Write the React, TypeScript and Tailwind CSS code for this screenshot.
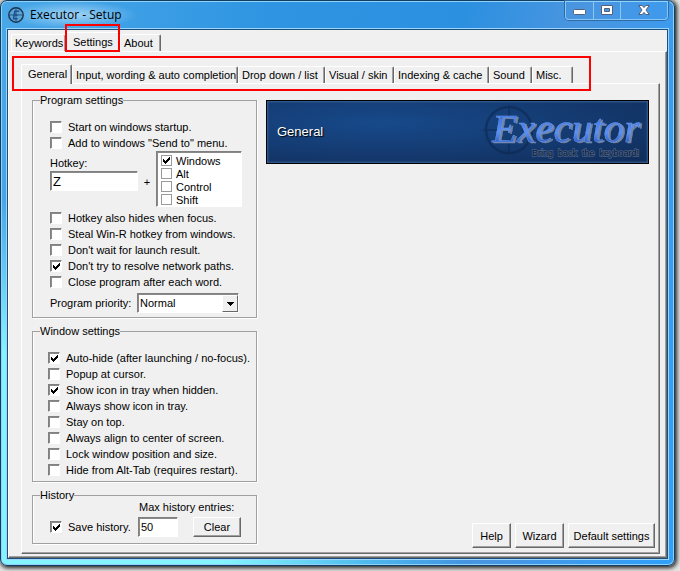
import type { ReactNode } from "react";
import clsx from "clsx";

const mainTabs = [
  { label: "Keywords", width: "w-[55px]" },
  { label: "Settings", width: "w-[54px]" },
  { label: "About", width: "w-[41px]" },
];

const pageTabs = [
  { label: "General", width: "w-[51px]" },
  { label: "Input, wording & auto completion", width: "w-[166px]" },
  { label: "Drop down / list", width: "w-[87px]" },
  { label: "Visual / skin", width: "w-[69px]" },
  { label: "Indexing & cache", width: "w-[95px]" },
  { label: "Sound", width: "w-[43px]" },
  { label: "Misc.", width: "w-[41px]" },
];

const modifiers = [
  { label: "Windows", checked: true },
  { label: "Alt", checked: false },
  { label: "Control", checked: false },
  { label: "Shift", checked: false },
];

const startupOptions = [
  { label: "Start on windows startup.", checked: false },
  { label: 'Add to windows "Send to" menu.', checked: false },
];

const launchOptions = [
  { label: "Hotkey also hides when focus.", checked: false },
  { label: "Steal Win-R hotkey from windows.", checked: false },
  { label: "Don't wait for launch result.", checked: false },
  { label: "Don't try to resolve network paths.", checked: true },
  { label: "Close program after each word.", checked: false },
];

const windowOptions = [
  { label: "Auto-hide (after launching / no-focus).", checked: true },
  { label: "Popup at cursor.", checked: false },
  { label: "Show icon in tray when hidden.", checked: true },
  { label: "Always show icon in tray.", checked: false },
  { label: "Stay on top.", checked: false },
  { label: "Always align to center of screen.", checked: false },
  { label: "Lock window position and size.", checked: false },
  { label: "Hide from Alt-Tab (requires restart).", checked: false },
];

const sunken =
  "border border-t-[#808080] border-l-[#808080] border-r-white border-b-white bg-white shadow-[inset_1px_1px_0_#8a8a8a]";

function Check({ label, checked, flat }: { label: string; checked: boolean; flat?: boolean }) {
  return (
    <label className={clsx("flex items-center", flat ? "h-[13px] gap-1" : "h-4 gap-1.5")}>
      <span className="grid shrink-0">
        <input
          type="checkbox"
          defaultChecked={checked}
          className={clsx(
            "peer col-start-1 row-start-1 m-0 appearance-none",
            flat ? "size-[11px] border border-[#9a9a9a] bg-white" : clsx("size-3", sunken)
          )}
        />
        <svg
          viewBox="0 0 7 7"
          className="pointer-events-none invisible col-start-1 row-start-1 size-[7px] place-self-center peer-checked:visible"
          shapeRendering="crispEdges"
        >
          <path d="M0 2h1v1h1v1h1v-1h1v-1h1v-1h1v-1h1v3h-1v1h-1v1h-1v1h-1v1h-1v-1h-1v-1h-1z" />
        </svg>
      </span>
      <span className="whitespace-nowrap">{label}</span>
    </label>
  );
}

function Group({ title, className, children }: { title: string; className: string; children: ReactNode }) {
  return (
    <fieldset className="min-w-0 border border-[#a0a0a0] shadow-[1px_1px_0_#fff,inset_1px_0_0_#fff]">
      <legend className="ml-[7px] bg-[#f0f0f0] leading-3">{title}</legend>
      <div className={className}>{children}</div>
    </fieldset>
  );
}

function Button({ children, className }: { children: ReactNode; className?: string }) {
  return (
    <button
      type="button"
      className={clsx(
        "border border-t-white border-l-white border-r-[#696969] border-b-[#696969] bg-[#f0f0f0] text-center whitespace-nowrap shadow-[inset_-1px_-1px_0_#a0a0a0]",
        className
      )}
    >
      {children}
    </button>
  );
}

function Tab({ label, width, selected }: { label: string; width: string; selected?: boolean }) {
  return (
    <button
      type="button"
      role="tab"
      aria-selected={!!selected}
      className={clsx(
        "rounded-t-xs border-t border-r border-l border-t-white border-r-[#696969] border-l-white bg-[#f0f0f0] text-left whitespace-nowrap shadow-[inset_-1px_0_0_#a0a0a0]",
        selected ? "z-10 -mb-px h-5 pb-0.5 pl-1.5" : "h-[17px] pl-[3px]",
        width
      )}
    >
      {label}
    </button>
  );
}

function AppIcon() {
  return (
    <svg viewBox="0 0 16 16" className="size-4" fill="none">
      <circle cx="8" cy="8" r="7.2" fill="#5aa3d3" stroke="#1b3550" strokeWidth="1.4" />
      <path d="M0.5 8h15M8 0.5v15" stroke="#1d486f" strokeWidth="0.8" />
      <path d="M6.2 4.2h5M5.4 8h4.2M4.8 11.8h4.8M6.9 4.2L5.5 11.8" stroke="#1c4f96" strokeWidth="1.5" />
    </svg>
  );
}

function TitleBar() {
  return (
    <header className="flex h-7 shrink-0 items-start justify-between pl-px">
      <div className="flex h-7 items-center gap-1.5 bg-[radial-gradient(ellipse_at_center,rgba(190,228,250,0.75),transparent_70%)] pr-4">
        <AppIcon />
        <h1 className="font-['Open_Sans',sans-serif] text-[12px] leading-4 text-black">Executor - Setup</h1>
      </div>
      <div className="flex h-[19px] rounded-b-[4px] border border-t-0 border-[#8cc6f2] text-white shadow-[0_0_0_1px_#2b6ca8]">
        <button type="button" aria-label="Minimize" className="grid w-7 place-items-center border-r border-[#8cc6f2]">
          <svg viewBox="0 0 13 6" className="mt-1 h-1.5 w-[13px]">
            <rect x="0.5" y="0.5" width="12" height="5" rx="1" fill="#fff" stroke="#566079" />
          </svg>
        </button>
        <button type="button" aria-label="Maximize" className="grid w-[27px] place-items-center border-r border-[#8cc6f2]">
          <svg viewBox="0 0 12 10" className="h-2.5 w-3">
            <path
              d="M0.5 0.5h11v9h-11zM3.5 3.5v3h5v-3z"
              fill="#fff"
              fillRule="evenodd"
              stroke="#566079"
            />
          </svg>
        </button>
        <button type="button" aria-label="Close" className="grid w-[46px] place-items-center">
          <svg viewBox="0 0 12 10" className="h-2.5 w-3">
            <path
              d="M0.8 0.5h3.4L6 2.6 7.8 0.5h3.4L8 5l3.2 4.5H7.8L6 7.4 4.2 9.5H0.8L4 5z"
              fill="#fff"
              stroke="#566079"
            />
          </svg>
        </button>
      </div>
    </header>
  );
}

function Banner() {
  return (
    <div className="flex h-16 items-center justify-between overflow-hidden border border-black bg-[radial-gradient(ellipse_at_30%_35%,#17498a,#143a70_55%,#102c58)] pl-2.5 shadow-[inset_0_0_2px_1px_#3a6298]">
      <h2 className="text-[13px] text-white [text-shadow:1px_1px_1px_#000]">General</h2>
      <svg viewBox="0 0 170 62" className="h-[62px] w-[170px]" role="img" aria-label="Executor">
        <defs>
          <linearGradient id="logo" x1="0" y1="0" x2="0" y2="1">
            <stop offset="0.2" stopColor="#3a70dd" />
            <stop offset="0.6" stopColor="#5a90f2" />
            <stop offset="0.8" stopColor="#3263c8" />
          </linearGradient>
        </defs>
        <g fill="none" stroke="#0d2850" strokeWidth="2.5" opacity="0.6">
          <circle cx="31" cy="29" r="23" />
          <path d="M5 29h14M43 29h14M31 4v12M31 42v12" strokeWidth="1.5" />
        </g>
        <text
          x="14"
          y="41"
          fontFamily="Liberation Serif, serif"
          fontStyle="italic"
          fontSize="41"
          fill="url(#logo)"
          stroke="#6f9cf0"
          strokeWidth="0.4"
          className="drop-shadow-[2px_1px_0_#75849f]"
        >
          Executor
        </text>
        <text
          x="54"
          y="55"
          fontFamily="Liberation Sans, sans-serif"
          fontSize="9"
          fill="#0b1a33"
          stroke="#47608a"
          strokeWidth="1.5"
          paintOrder="stroke"
          xmlSpace="preserve"
        >
          Bring  back  the  keyboard!
        </text>
      </svg>
    </div>
  );
}

function ProgramSettings() {
  return (
    <Group title="Program settings" className="h-[211px] pt-[13px] pl-[17px]">
      {startupOptions.map((option) => (
        <Check key={option.label} {...option} />
      ))}
      <div className="flex h-[59px] items-start">
        <div className="w-[88px] pt-1">
          <label htmlFor="hotkey" className="block h-4">
            Hotkey:
          </label>
          <input id="hotkey" defaultValue="Z" className={clsx("block h-5 w-full px-0.5 text-[13px]", sunken)} />
        </div>
        <span className="mt-[23px] w-[18px] text-center">+</span>
        <div className={clsx("h-14 w-[86px] py-0.5 pl-1", sunken)}>
          {modifiers.map((modifier) => (
            <Check key={modifier.label} flat {...modifier} />
          ))}
        </div>
      </div>
      {launchOptions.map((option) => (
        <Check key={option.label} {...option} />
      ))}
      <div className="mt-[3px] flex items-center">
        <label htmlFor="priority" className="w-[87px]">
          Program priority:
        </label>
        <div className={clsx("grid h-5 w-[102px]", sunken)}>
          <select
            id="priority"
            defaultValue="Normal"
            className="col-start-1 row-start-1 appearance-none px-0.5 leading-4 outline-none"
          >
            <option>Low</option>
            <option>Normal</option>
            <option>High</option>
          </select>
          <span className="pointer-events-none col-start-1 row-start-1 mt-px grid w-4 place-items-center justify-self-end border border-t-white border-l-white border-r-[#696969] border-b-[#696969] bg-[#f0f0f0]">
            <svg viewBox="0 0 7 4" className="h-1 w-[7px]" shapeRendering="crispEdges">
              <path d="M0 0h7v1h-1v1h-1v1h-1v1h-1v-1h-1v-1h-1v-1h-1z" />
            </svg>
          </span>
        </div>
      </div>
    </Group>
  );
}

function WindowSettings() {
  return (
    <Group title="Window settings" className="h-[144px] pt-[13px] pl-[15px]">
      {windowOptions.map((option) => (
        <Check key={option.label} {...option} />
      ))}
    </Group>
  );
}

function History() {
  return (
    <Group title="History" className="h-[42px] pl-[17px]">
      <label htmlFor="max-history" className="ml-[89px] block h-4 leading-3">
        Max history entries:
      </label>
      <div className="flex items-center">
        <div className="w-[88px]">
          <Check label="Save history." checked />
        </div>
        <input id="max-history" defaultValue="50" className={clsx("h-5 w-10 px-0.5", sunken)} />
        <Button className="ml-[15px] h-5 w-12">Clear</Button>
      </div>
    </Group>
  );
}

export default function App() {
  return (
    <div className="flex h-screen min-h-[571px] bg-[#e4e4e4] pr-[5px] pb-[5px] font-['Liberation_Sans',Arial,sans-serif] text-[11px] leading-4 text-black">
      <div className="flex flex-1 flex-col rounded-[7px] border border-[#123d63] bg-[radial-gradient(ellipse_70%_55%_at_0%_90%,#86f4ff_50%,transparent),linear-gradient(100deg,#4aa8e8,#2f95e2_35%,#2b90e0_60%,#4a95e0_75%,#30a0fa)] p-1.5 pt-0 shadow-[1px_1px_4px_1px_#222,inset_0_0_0_1px_#8fd4f8]">
        <TitleBar />
        <main className="flex flex-1 flex-col border border-[#1c4f7c] bg-[#f0f0f0] shadow-[0_0_0_1px_#9bd6f8]">
          <div role="tablist" className="relative flex h-[21px] items-end pl-[3px]">
            {mainTabs.map((tab) => (
              <Tab key={tab.label} {...tab} selected={tab.label === "Settings"} />
            ))}
            <div className="pointer-events-none absolute -top-1.5 left-[57px] z-20 h-7 w-[55px] border-2 border-[#f00]" />
          </div>
          <section className="flex flex-1 flex-col border border-t-white border-l-white border-r-[#696969] border-b-[#696969] pt-2.5 pr-1.5 pb-[3px] pl-3 shadow-[inset_-1px_-1px_0_#a0a0a0]">
            <div role="tablist" className="relative flex h-[21px] items-end">
              {pageTabs.map((tab) => (
                <Tab key={tab.label} {...tab} selected={tab.label === "General"} />
              ))}
              <div className="pointer-events-none absolute -top-1.5 -left-[9px] z-20 h-[35px] w-[579px] border-2 border-[#f00]" />
            </div>
            <section className="flex flex-1 gap-[9px] border border-t-white border-l-white border-r-[#696969] border-b-[#696969] pt-2.5 pr-1 pb-[5px] pl-2.5 shadow-[inset_-1px_-1px_0_#a0a0a0]">
              <div className="flex w-[225px] shrink-0 flex-col gap-[7px]">
                <ProgramSettings />
                <WindowSettings />
                <History />
              </div>
              <div className="flex flex-1 flex-col justify-between pt-1.5">
                <div className="pr-1.5">
                  <Banner />
                </div>
                <div className="flex justify-end gap-1">
                  <Button className="h-[25px] w-[39px]">Help</Button>
                  <Button className="h-[25px] w-[49px]">Wizard</Button>
                  <Button className="h-[25px] w-[87px]">Default settings</Button>
                </div>
              </div>
            </section>
          </section>
        </main>
      </div>
    </div>
  );
}
